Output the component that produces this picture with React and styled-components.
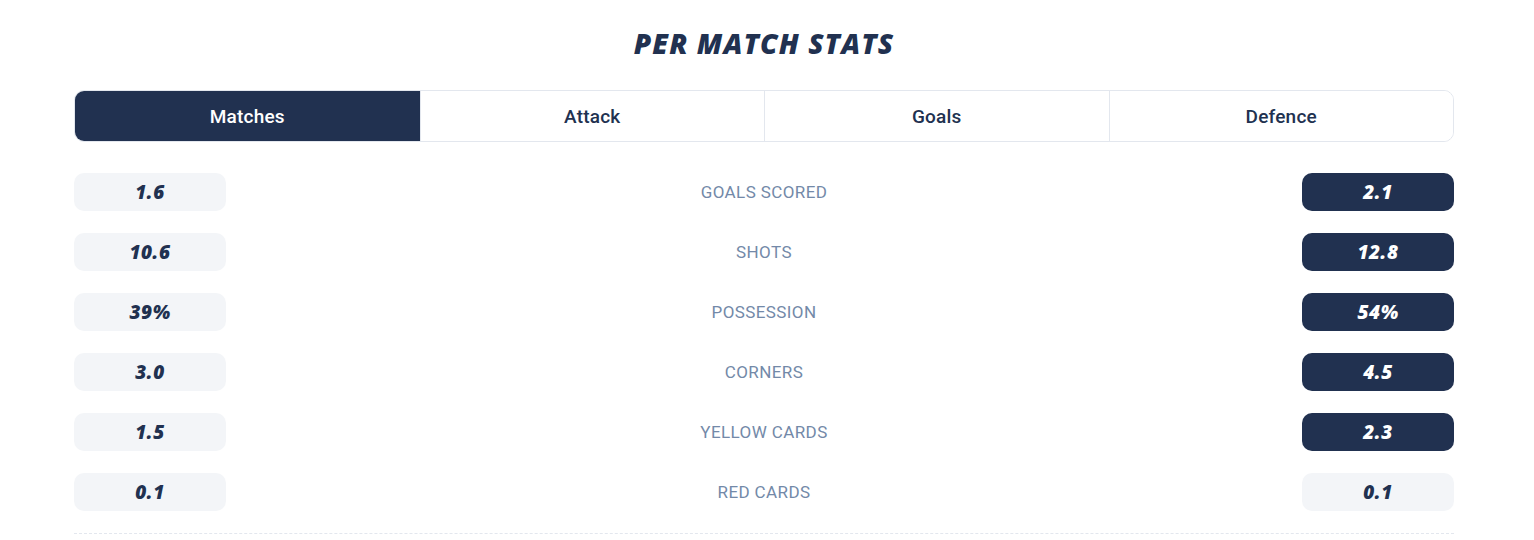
import React from "react";
import styled, { createGlobalStyle } from "styled-components";

const DARK = "#213150";

const GlobalStyle = createGlobalStyle`
  body {
    margin: 0;
    background: #ffffff;
    font-family: Roboto, "Liberation Sans", sans-serif;
  }
`;

const tabs = ["Matches", "Attack", "Goals", "Defence"];

const stats = [
  { label: "GOALS SCORED", home: "1.6", away: "2.1", awayWins: true },
  { label: "SHOTS", home: "10.6", away: "12.8", awayWins: true },
  { label: "POSSESSION", home: "39%", away: "54%", awayWins: true },
  { label: "CORNERS", home: "3.0", away: "4.5", awayWins: true },
  { label: "YELLOW CARDS", home: "1.5", away: "2.3", awayWins: true },
  { label: "RED CARDS", home: "0.1", away: "0.1", awayWins: false },
];

export default function App() {
  const [active, setActive] = React.useState(0);

  return (
    <Page>
      <GlobalStyle />
      <Title>PER MATCH STATS</Title>
      <TabBar>
        {tabs.map((tab, idx) => (
          <Tab key={tab} active={idx === active} onClick={() => setActive(idx)}>
            {tab}
          </Tab>
        ))}
      </TabBar>
      <StatList>
        {stats.map((s) => (
          <StatRow key={s.label}>
            <Value>{s.home}</Value>
            <Label>{s.label}</Label>
            <Value highlight={s.awayWins}>{s.away}</Value>
          </StatRow>
        ))}
      </StatList>
    </Page>
  );
}

const Page = styled.div`
  padding: 26px 80px 0 74px;
  display: flex;
  flex-direction: column;
`;

const Title = styled.h2`
  margin: 0 0 30px;
  text-align: center;
  font-family: "Open Sans", "Liberation Sans", sans-serif;
  font-style: italic;
  font-weight: 800;
  font-size: 28px;
  line-height: 34px;
  color: ${DARK};
  letter-spacing: 1.1px;
`;

const TabBar = styled.div`
  display: grid;
  grid-template-columns: repeat(4, 1fr);
  height: 52px;
  border: 1px solid #e3e7ee;
  border-radius: 10px;
  overflow: hidden;
  box-sizing: border-box;
`;

const Tab = styled.button`
  border: none;
  border-left: 1px solid #e3e7ee;
  margin: 0;
  padding: 0;
  cursor: pointer;
  font-family: Roboto, "Liberation Sans", sans-serif;
  font-weight: 500;
  font-size: 19px;
  letter-spacing: 0.2px;
  color: ${(props) => (props.active ? "#ffffff" : DARK)};
  background: ${(props) => (props.active ? DARK : "#ffffff")};

  &:first-child {
    border-left: none;
  }
`;

const StatList = styled.div`
  display: flex;
  flex-direction: column;
  gap: 22px;
  padding: 31px 0 22px;
  border-bottom: 1px dashed #e3e7ee;
`;

const StatRow = styled.div`
  display: grid;
  grid-template-columns: 152px 1fr 152px;
  align-items: center;
`;

const Value = styled.div`
  height: 38px;
  border-radius: 10px;
  display: flex;
  align-items: center;
  justify-content: center;
  font-family: "Open Sans", "Liberation Sans", sans-serif;
  font-style: italic;
  font-weight: 800;
  font-size: 19px;
  letter-spacing: 0.5px;
  color: ${(props) => (props.highlight ? "#ffffff" : DARK)};
  background: ${(props) => (props.highlight ? DARK : "#f3f5f8")};
`;

const Label = styled.div`
  text-align: center;
  font-family: Roboto, "Liberation Sans", sans-serif;
  font-size: 17px;
  letter-spacing: 0.4px;
  color: #7389a8;
`;
